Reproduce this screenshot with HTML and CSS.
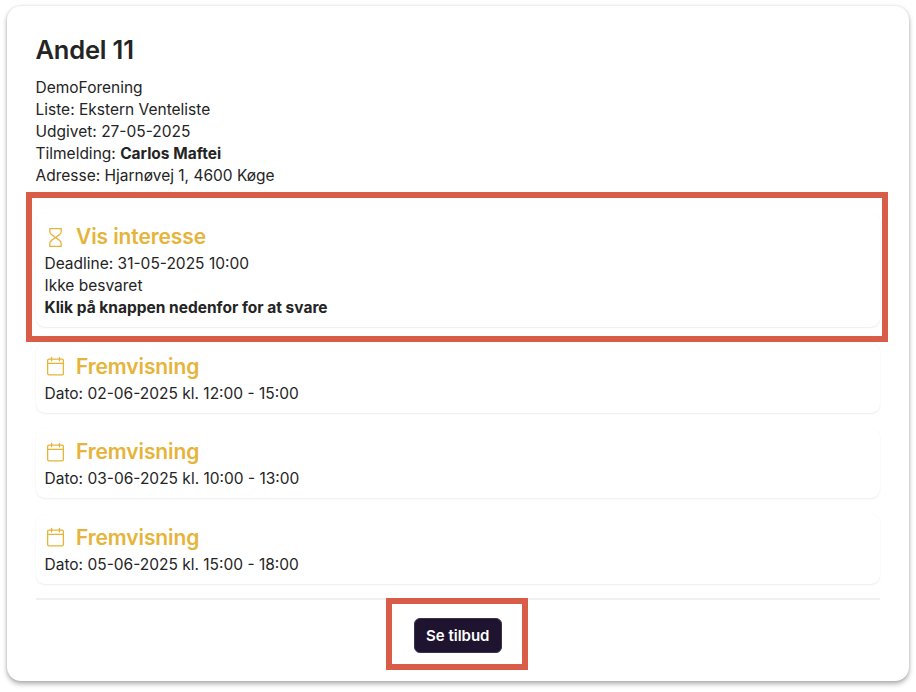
FILE: index.html
```html
<!DOCTYPE html>
<html lang="da">
<head>
<meta charset="utf-8">
<title>Andel 11</title>
<link rel="stylesheet" href="styles.css">
</head>
<body>
<main class="panel">
  <h1 class="title">Andel 11</h1>
  <div class="info">
    <div>DemoForening</div>
    <div>Liste: Ekstern Venteliste</div>
    <div>Udgivet: 27-05-2025</div>
    <div>Tilmelding: <b>Carlos Maftei</b></div>
    <div>Adresse: Hjarnøvej 1, 4600 Køge</div>
  </div>
  <div class="events">
    <section class="event">
      <h2 class="event-title">
        <svg class="icon" viewBox="0 0 24 24" fill="none" stroke="currentColor" stroke-width="1.5" stroke-linecap="round" stroke-linejoin="round"><path d="M5.500 1.800h13v3.400c0 1.300-.6 2.400-1.600 3.200L12 12l-4.900-3.600C6.100 7.600 5.500 6.500 5.500 5.200zM5.500 22.200h13v-3.400c0-1.300-.6-2.400-1.600-3.200L12 12l-4.900 3.600c-1 .8-1.600 1.900-1.600 3.200z"/></svg>
        Vis interesse
      </h2>
      <div>Deadline: 31-05-2025 10:00</div>
      <div>Ikke besvaret</div>
      <div><b>Klik på knappen nedenfor for at svare</b></div>
    </section>
    <section class="event">
      <h2 class="event-title">
        <svg class="icon" viewBox="0 0 24 24" fill="none" stroke="currentColor" stroke-width="1.5" stroke-linecap="round" stroke-linejoin="round"><rect x="3" y="3.500" width="18" height="18" rx="1.500"/><path d="M3 8.500h18M7.500 1.500v4M16.500 1.500v4"/></svg>
        Fremvisning
      </h2>
      <div>Dato: 02-06-2025 kl. 12:00 - 15:00</div>
    </section>
    <section class="event">
      <h2 class="event-title">
        <svg class="icon" viewBox="0 0 24 24" fill="none" stroke="currentColor" stroke-width="1.5" stroke-linecap="round" stroke-linejoin="round"><rect x="3" y="3.500" width="18" height="18" rx="1.500"/><path d="M3 8.500h18M7.500 1.500v4M16.500 1.500v4"/></svg>
        Fremvisning
      </h2>
      <div>Dato: 03-06-2025 kl. 10:00 - 13:00</div>
    </section>
    <section class="event">
      <h2 class="event-title">
        <svg class="icon" viewBox="0 0 24 24" fill="none" stroke="currentColor" stroke-width="1.5" stroke-linecap="round" stroke-linejoin="round"><rect x="3" y="3.500" width="18" height="18" rx="1.500"/><path d="M3 8.500h18M7.500 1.500v4M16.500 1.500v4"/></svg>
        Fremvisning
      </h2>
      <div>Dato: 05-06-2025 kl. 15:00 - 18:00</div>
    </section>
  </div>
  <footer class="actions">
    <button class="offer" type="button">Se tilbud</button>
  </footer>
</main>
<div class="mark mark-event"></div>
<div class="mark mark-button"></div>
</body>
</html>
```
FILE: styles.css
```css
* { box-sizing: border-box; }
html, body { height: 100%; }
body {
  margin: 0;
  padding: 6px 7px 11px;
  background: #fff;
  font-family: Inter, "Liberation Sans", sans-serif;
  font-size: 15.500px;
  line-height: 22px;
  color: #242424;
  overflow: hidden;
}
.panel {
  height: 675px;
  padding: 29px 29px 0 28.500px;
  background: #fff;
  border-radius: 14px;
  box-shadow: 0 3px 5px rgba(0, 0, 0, .3), 0 0 3px rgba(0, 0, 0, .12);
}
.title {
  margin: 0 0 12px;
  font-size: 25.500px;
  line-height: 30px;
  font-weight: 600;
  letter-spacing: -.2px;
}
.info { margin-bottom: 26px; }
.events { display: flex; flex-direction: column; gap: 15.500px; }
.event {
  padding: 10px 9px 8px;
  border-radius: 9px;
  box-shadow: 0 1px 2px rgba(0, 0, 0, .07), 0 0 1px rgba(0, 0, 0, .05);
}
.event-title {
  display: flex;
  align-items: center;
  gap: 10.500px;
  margin: 0 0 2px;
  height: 28px;
  font-size: 21px;
  line-height: 28px;
  font-weight: 600;
  letter-spacing: -.1px;
  color: #e6b43a;
}
.icon { width: 21px; height: 21px; flex: none; }
.actions {
  margin-top: 14px;
  padding-top: 18px;
  border-top: 2px solid #f0f0f0;
  display: flex;
  justify-content: center;
}
.offer {
  width: 88px;
  height: 35px;
  padding: 0;
  border: 1px solid #3a3350;
  border-radius: 6px;
  background: #1e1430;
  color: #fff;
  font: 600 15px/1 Inter, "Liberation Sans", sans-serif;
}
.mark { position: absolute; border: 6px solid #d95c48; }
.mark-event { left: 26px; top: 192px; width: 862px; height: 150px; }
.mark-button { left: 386px; top: 598px; width: 142px; height: 72px; }
```
